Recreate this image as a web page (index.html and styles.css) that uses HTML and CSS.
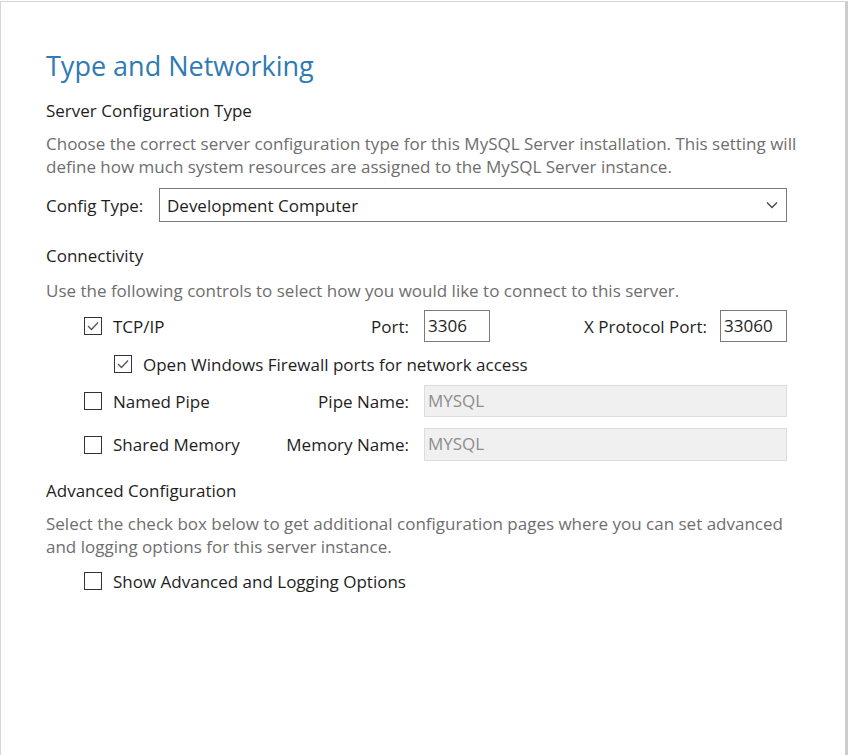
FILE: index.html
```html
<!DOCTYPE html>
<html>
<head>
<meta charset="utf-8">
<link rel="stylesheet" href="styles.css">
</head>
<body>
<div class="frame">
  <div class="content">
    <h1 class="title">Type and Networking</h1>

    <div class="heading h-server">Server Configuration Type</div>
    <p class="desc d-server">Choose the correct server configuration type for this MySQL Server installation. This setting will<br>define how much system resources are assigned to the MySQL Server instance.</p>

    <div class="config-row">
      <span class="label config-label">Config Type:</span>
      <div class="select">
        <span class="select-text">Development Computer</span>
        <svg class="chevron" width="12" height="8" viewBox="0 0 12 8"><path d="M1 1.5 L6 6.5 L11 1.5" fill="none" stroke="#444" stroke-width="1.3"/></svg>
      </div>
    </div>

    <div class="heading h-conn">Connectivity</div>
    <p class="desc d-conn">Use the following controls to select how you would like to connect to this server.</p>

    <div class="conn-row r-tcp">
      <div class="check-area">
        <span class="cb checked"><svg width="16" height="16" viewBox="0 0 16 16"><path d="M3 8 L6.5 11.5 L13 4.5" fill="none" stroke="#555" stroke-width="1.3"/></svg></span>
        <span class="label">TCP/IP</span>
      </div>
      <span class="label field-label">Port:</span>
      <div class="input small">3306</div>
      <span class="label xport-label">X Protocol Port:</span>
      <div class="input small">33060</div>
    </div>

    <div class="conn-row r-fw">
      <div class="check-area sub">
        <span class="cb checked"><svg width="16" height="16" viewBox="0 0 16 16"><path d="M3 8 L6.5 11.5 L13 4.5" fill="none" stroke="#555" stroke-width="1.3"/></svg></span>
        <span class="label">Open Windows Firewall ports for network access</span>
      </div>
    </div>

    <div class="conn-row r-pipe">
      <div class="check-area">
        <span class="cb"></span>
        <span class="label">Named Pipe</span>
      </div>
      <span class="label field-label">Pipe Name:</span>
      <div class="input wide disabled">MYSQL</div>
    </div>

    <div class="conn-row r-mem">
      <div class="check-area">
        <span class="cb"></span>
        <span class="label">Shared Memory</span>
      </div>
      <span class="label field-label">Memory Name:</span>
      <div class="input wide disabled">MYSQL</div>
    </div>

    <div class="heading h-adv">Advanced Configuration</div>
    <p class="desc d-adv">Select the check box below to get additional configuration pages where you can set advanced<br>and logging options for this server instance.</p>

    <div class="conn-row r-adv">
      <div class="check-area">
        <span class="cb"></span>
        <span class="label">Show Advanced and Logging Options</span>
      </div>
    </div>
  </div>
</div>
</body>
</html>
```

FILE: styles.css
```css
html, body {
  margin: 0;
  padding: 0;
  background: #ffffff;
}

body {
  font-family: "Open Sans", "Noto Sans", sans-serif;
  font-size: 17px;
  color: #1e1e1e;
}

.frame {
  box-sizing: border-box;
  width: 848px;
  height: 754px;
  margin-top: 1px;
  border-top: 1px solid #d6d6d6;
  border-left: 1px solid #d6d6d6;
  border-right: 3px solid #cdcdcd;
}

.content {
  box-sizing: border-box;
  width: 786px;
  padding: 47px 0 0 45px;
}

.title {
  margin: 0;
  font-size: 27px;
  font-weight: 400;
  line-height: 34px;
  color: #2f7bb2;
}

.heading {
  line-height: 22px;
  color: #1e1e1e;
}

.h-server { margin-top: 17px; }
.h-conn { margin-top: 23px; }
.h-adv { margin-top: 19px; }

.desc {
  margin: 0;
  line-height: 23px;
  color: #6e6e6e;
  white-space: nowrap;
}

.d-server { margin-top: 10px; }
.d-conn { margin-top: 12px; }
.d-adv { margin-top: 10px; }

.label {
  white-space: nowrap;
}

.config-row {
  display: flex;
  align-items: center;
  margin-top: 10px;
}

.config-label {
  width: 113px;
}

.select {
  box-sizing: border-box;
  flex: 1;
  height: 34px;
  border: 1px solid #7a7a7a;
  display: flex;
  align-items: center;
  justify-content: space-between;
  padding: 0 8px 0 7px;
}

.chevron {
  display: block;
}

.conn-row {
  display: flex;
  align-items: center;
}

.r-tcp { margin-top: 8px; height: 32px; }
.r-fw { margin-top: 11px; height: 22px; }
.r-pipe { margin-top: 10px; height: 32px; }
.r-mem { margin-top: 11px; height: 33px; }
.r-adv { margin-top: 12px; height: 22px; }

.check-area {
  display: flex;
  align-items: center;
  gap: 11px;
  width: 200px;
  margin-left: 38px;
}

.check-area.sub {
  margin-left: 68px;
  width: auto;
}

.cb {
  box-sizing: border-box;
  width: 18px;
  height: 18px;
  border: 1px solid #333333;
  background: #ffffff;
  display: flex;
  align-items: center;
  justify-content: center;
  flex: none;
}

.cb svg {
  display: block;
}

.field-label {
  width: 125px;
  text-align: right;
  margin-right: 15px;
}

.input {
  box-sizing: border-box;
  height: 100%;
  border: 1px solid #7a7a7a;
  padding: 0 0 0 3px;
  display: flex;
  align-items: center;
  padding-bottom: 2px;
}

.input.small {
  width: 66px;
}

.input.small:last-child {
  width: 67px;
}

.xport-label {
  margin-left: auto;
  margin-right: 13px;
}

.input.wide {
  flex: 1;
}

.input.disabled {
  background: #f0f0f0;
  border-color: #dcdcdc;
  color: #8d8d8d;
}
```
